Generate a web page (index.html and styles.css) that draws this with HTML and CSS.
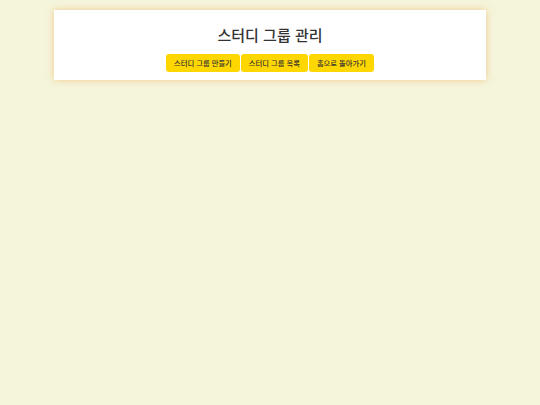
FILE: index.html
```html
<!DOCTYPE html>
<html lang="ko">
<head>
<meta charset="UTF-8">
<meta name="viewport" content="width=device-width, initial-scale=1.0">
<title>스터디 그룹 관리</title>
<link rel="stylesheet" href="styles.css">
</head>
<body>
<div class="container">
    <h2>스터디 그룹 관리</h2>
    <div class="nav-buttons">
        <button class="nav-btn">스터디 그룹 만들기</button>
        <button class="nav-btn">스터디 그룹 목록</button>
        <button class="nav-btn">홈으로 돌아가기</button>
    </div>
</div>
</body>
</html>
```

FILE: styles.css
```css
body {
    font-family: "Noto Sans CJK KR", "Noto Sans", sans-serif;
    margin: 0;
    padding: 0;
    background-color: #f5f5dc;
}
.container {
    width: 80%;
    margin: 10px auto;
    padding: 14px 20px 8px;
    box-sizing: border-box;
    background-color: #fff;
    box-shadow: 0 0 7px rgba(240, 160, 60, 0.5);
    text-align: center;
}
h2 {
    color: #333;
    font-size: 15px;
    font-weight: 500;
    line-height: 22px;
    margin: 0 0 8px;
}
.nav-buttons {
    display: flex;
    justify-content: center;
    gap: 1px;
}
.nav-btn {
    font-family: inherit;
    font-size: 7.3px;
    font-weight: 500;
    line-height: 10px;
    padding: 4px 8px;
    background-color: #ffd700;
    color: #333;
    border: none;
    border-radius: 3px;
    cursor: pointer;
}
```
